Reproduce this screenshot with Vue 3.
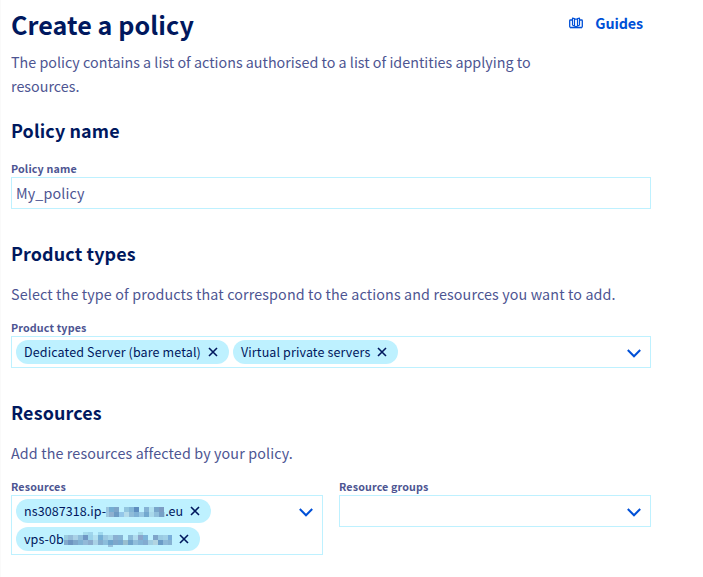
<script setup>
// Pixelated cover for the masked part of an address. Each row: [y, height, cells by column];
// a null cell lets the chip background through.
const ipMask = {
  width: 59, height: 15, first: 3,
  rows: [
    [3, 5, ['#9cc5de', '#74add2', '#7ca5c9', null, '#92c6df', '#82b6d7', '#5d8dbf', null, '#85b3d5', '#b0e1f0', '#78a6cb', '#7b9cc4', null]],
    [8, 5, ['#9dc8e0', '#8eb0cf', '#6c9bc4', '#93c6e8', '#b4dbea', '#8fbcd9', '#7eb1d6', '#97c7e3', '#73a8cf', '#a9d8ea', '#90bfdc', '#76a0c7', '#a6d5ec']],
  ],
}
const vpsMask = {
  width: 108, height: 15, first: 4,
  rows: [
    [0, 3, [null, null, null, null, '#a5dced', '#a0d5ec', null, '#9fd8ee', null, null, null, null, null, null, null, '#a8dcea']],
    [3, 5, ['#9accdf', '#94bcd9', '#a9d1e6', '#8fbedb', '#6f97c4', '#9ad2ea', '#b2e0f0', '#76b0d6', '#9bc9e2', '#a5d6ea', '#8ab0d2', '#86b4d5', null, '#8bbbd9', '#b0dcee', '#8aa5cb', '#7cb4da', null, '#7ea5ca', '#9acbe3', '#a0d0e6', '#78aeda']],
    [8, 5, ['#84aacb', '#6d95c1', '#7da7cb', '#80b3d5', '#92b9d8', '#8bacce', '#a9d2e6', '#83adcf', '#8bbddb', '#6fa5cd', '#7fa7ca', '#78a9cf', '#99bfcf', '#70a3cb', '#90bedb', '#82b3d6', '#82abd0', '#a2cfe3', '#b2d4e1', '#6b9cc7', '#8db9d8', '#86b2d2']],
    [13, 2, [null, null, null, null, null, null, null, null, null, '#98c0dc']],
  ],
}

function cells(mask) {
  return mask.rows.flatMap(([y, h, colors]) =>
    colors
      .map((fill, i) => ({
        x: i === 0 ? 0 : mask.first + (i - 1) * 5,
        y,
        w: i === 0 ? mask.first : 5,
        h,
        fill,
      }))
      .filter((c) => c.fill),
  )
}

const products = ['Dedicated Server (bare metal)', 'Virtual private servers']
const resources = [
  { before: 'ns3087318.ip-', mask: ipMask, after: '.eu' },
  { before: 'vps-0b', mask: vpsMask, after: '' },
]
</script>

<template>
  <main class="page">
    <header class="head">
      <h1>Create a policy</h1>
      <a class="guides">
        <svg width="14" height="12" viewBox="0 0 14 12" fill="none" stroke="#0050d7" stroke-linejoin="round">
          <path stroke-width="1.3" d="M3 3H1.4Q.7 3 .7 3.7V9.6Q.7 10.3 1.4 10.3H12.6Q13.3 10.3 13.3 9.6V3.7Q13.3 3 12.6 3H11" />
          <path stroke-width="1.2" d="M3.5 8.3V1.2L5.5 1.5V9Q4.8 8.4 3.5 8.3M10.5 8.3V1.2L8.5 1.5V9Q9.2 8.4 10.5 8.3M5.5 2.2H8.5M5.5 9L7 10L8.5 9" />
          <path stroke-width="1.4" stroke-opacity=".45" d="M1 11H13" />
        </svg>
        <span>Guides</span>
      </a>
    </header>
    <p class="intro">The policy contains a list of actions authorised to a list of identities applying to resources.</p>

    <section>
      <h2>Policy name</h2>
      <label>Policy name</label>
      <div class="box"><span class="value">My_policy</span></div>
    </section>

    <section>
      <h2>Product types</h2>
      <p>Select the type of products that correspond to the actions and resources you want to add.</p>
      <label>Product types</label>
      <div class="box">
        <div class="chips">
          <span v-for="name in products" :key="name" class="chip">
            <span>{{ name }}</span>
            <svg class="close" width="10" height="10" viewBox="0 0 10 10"><path d="M1 1L9 9M9 1L1 9" /></svg>
          </span>
        </div>
        <svg class="chevron" width="14" height="9" viewBox="0 0 14 9"><path d="M.8 1L7 7.3L13.2 1" /></svg>
      </div>
    </section>

    <section>
      <h2>Resources</h2>
      <p>Add the resources affected by your policy.</p>
      <div class="columns">
        <div>
          <label>Resources</label>
          <div class="box">
            <div class="chips stacked">
              <span v-for="r in resources" :key="r.before" class="chip">
                <span class="masked">
                  <span>{{ r.before }}</span>
                  <svg class="mask" :width="r.mask.width" :height="r.mask.height" shape-rendering="crispEdges">
                    <rect v-for="(c, i) in cells(r.mask)" :key="i" :x="c.x" :y="c.y" :width="c.w" :height="c.h" :fill="c.fill" />
                  </svg>
                  <span>{{ r.after }}</span>
                </span>
                <svg class="close" width="10" height="10" viewBox="0 0 10 10"><path d="M1 1L9 9M9 1L1 9" /></svg>
              </span>
            </div>
            <svg class="chevron" width="14" height="9" viewBox="0 0 14 9"><path d="M.8 1L7 7.3L13.2 1" /></svg>
          </div>
        </div>
        <div>
          <label>Resource groups</label>
          <div class="box">
            <svg class="chevron" width="14" height="9" viewBox="0 0 14 9"><path d="M.8 1L7 7.3L13.2 1" /></svg>
          </div>
        </div>
      </div>
    </section>
  </main>
</template>

<style>
body { background: #fff; overflow: hidden; }
</style>

<style scoped>
.page {
  box-sizing: border-box;
  width: 703px;
  height: 577px;
  padding: 6px 52px 0 10px;
  border-left: 1px solid #fafafa;
  font-family: "Noto Sans CJK SC", "Noto Sans", sans-serif;
  letter-spacing: 0.13px;
  color: #4d5592;
}
.head { display: flex; justify-content: space-between; align-items: flex-start; height: 44px; }
h1 { margin: 0; font-size: 25.1px; line-height: 36px; font-weight: 700; letter-spacing: 0.08px; color: #00185e; }
.guides {
  display: flex;
  align-items: center;
  gap: 12px;
  height: 34px;
  margin-right: 8px;
  color: #0050d7;
  font-size: 14.3px;
  line-height: 24px;
  font-weight: 700;
  letter-spacing: -0.1px;
}
p { margin: 0; font-size: 14.3px; line-height: 24px; }
.intro { width: 560px; margin-bottom: 19px; letter-spacing: 0.01px; }
section { margin-bottom: 31px; }
h2 { margin: 0 0 18px; font-size: 17.9px; line-height: 26px; font-weight: 700; color: #00185e; }
h2 + p { margin-top: -2px; margin-bottom: 14px; }
label { display: block; font-size: 10.74px; font-weight: 700; line-height: 16px; }
.box {
  box-sizing: border-box;
  display: flex;
  justify-content: space-between;
  align-items: flex-start;
  min-height: 32px;
  padding: 3px 9px 3px 4px;
  border: 1px solid #bef1ff;
}
.value { font-size: 14.3px; line-height: 24px; }
.chips { display: flex; gap: 4px; }
.stacked { flex-direction: column; align-items: flex-start; }
.chip {
  display: flex;
  align-items: center;
  gap: 7px;
  height: 24px;
  padding: 0 11px 0 8px;
  border-radius: 12px;
  background: #bef1ff;
  color: #00185e;
  font-size: 12.53px;
  line-height: 24px;
  letter-spacing: 0.12px;
  white-space: nowrap;
}
.masked { display: flex; align-items: center; letter-spacing: 0.07px; }
.mask { margin-top: 1px; }
.close { fill: none; stroke: #00185e; stroke-width: 1.6; }
.chevron { margin: 9px 0 0 auto; fill: none; stroke: #0050d7; stroke-width: 2; }
.columns { display: grid; grid-template-columns: 1fr 1fr; gap: 16px; align-items: start; }
</style>
